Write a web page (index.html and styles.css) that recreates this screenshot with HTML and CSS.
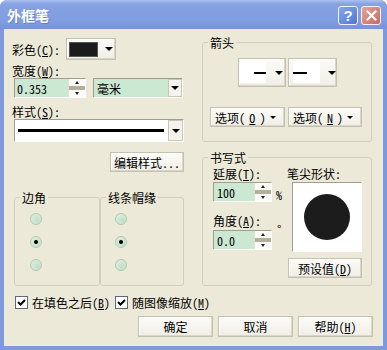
FILE: index.html
```
<!DOCTYPE html>
<html lang="zh-CN">
<head>
    <meta charset="UTF-8">
    <title>外框笔</title>
    <link rel="stylesheet" href="styles.css">
</head>
<body>

<div class="window">
    <div class="titlebar">
        <span class="title">外框笔</span>
        <div class="caption-btns">
            <span class="cap cap-help">?</span>
            <span class="cap cap-close">
                <svg width="11" height="11" viewBox="0 0 11 11"><path d="M1.5 1.5 L9.5 9.5 M9.5 1.5 L1.5 9.5" stroke="#fff" stroke-width="2.2" stroke-linecap="square"/></svg>
            </span>
        </div>
    </div>

    <div class="client">
        <div class="main">
            <!-- left column -->
            <div class="col-left">
                <div class="row color-row">
                    <span class="label">彩色(<u>C</u>):</span>
                    <span class="btn color-btn"><span class="swatch"></span><span class="tri"></span></span>
                </div>

                <div class="label label-width">宽度(<u>W</u>):</div>
                <div class="row width-row">
                    <div class="spin spin-width">
                        <span class="spin-field">0.353</span>
                        <span class="spin-btns"><i class="up"></i><i class="bar"></i><i class="down"></i></span>
                    </div>
                    <div class="combo combo-unit">
                        <span class="combo-field">毫米</span>
                        <span class="combo-btn"><span class="tri"></span></span>
                    </div>
                </div>

                <div class="label label-style">样式(<u>S</u>):</div>
                <div class="combo combo-style">
                    <span class="combo-field"><span class="line-sample"></span></span>
                    <span class="combo-btn"><span class="tri"></span></span>
                </div>

                <span class="btn edit-btn">编辑样式...</span>

                <div class="group-pair">
                    <fieldset class="group corner-group">
                        <legend>边角</legend>
                        <span class="radio"></span>
                        <span class="radio checked"></span>
                        <span class="radio"></span>
                    </fieldset>
                    <fieldset class="group cap-group">
                        <legend>线条帽缘</legend>
                        <span class="radio"></span>
                        <span class="radio checked"></span>
                        <span class="radio"></span>
                    </fieldset>
                </div>
            </div>

            <!-- right column -->
            <div class="col-right">
                <fieldset class="group arrows-group">
                    <legend>箭头</legend>
                    <div class="arrow-btns">
                        <span class="btn arrow-btn arrow-start"><span class="arrow-box"><span class="stub"></span></span><span class="tri"></span></span>
                        <span class="btn arrow-btn arrow-end"><span class="arrow-box"><span class="stub"></span></span><span class="tri"></span></span>
                    </div>
                    <div class="option-btns">
                        <span class="btn opt-btn">选项(<u>O</u>)<span class="tri small"></span></span>
                        <span class="btn opt-btn">选项(<u>N</u>)<span class="tri small"></span></span>
                    </div>
                </fieldset>

                <fieldset class="group calli-group">
                    <legend>书写式</legend>
                    <div class="calli-body">
                        <div class="calli-fields">
                            <div class="label">延展(<u>T</u>):</div>
                            <div class="row spin-row">
                                <div class="spin spin-small">
                                    <span class="spin-field">100</span>
                                    <span class="spin-btns"><i class="up"></i><i class="bar"></i><i class="down"></i></span>
                                </div>
                                <span class="unit">%</span>
                            </div>
                            <div class="label label-angle">角度(<u>A</u>):</div>
                            <div class="row spin-row angle-row">
                                <div class="spin spin-small">
                                    <span class="spin-field">0.0</span>
                                    <span class="spin-btns"><i class="up"></i><i class="bar"></i><i class="down"></i></span>
                                </div>
                                <span class="unit degree">°</span>
                            </div>
                        </div>
                        <div class="calli-preview">
                            <div class="label">笔尖形状:</div>
                            <div class="nib-box"><span class="nib"></span></div>
                            <span class="btn preset-btn">预设值(<u>D</u>)</span>
                        </div>
                    </div>
                </fieldset>
            </div>
        </div>

        <div class="checks">
            <span class="check"><svg width="11" height="11" viewBox="0 0 11 11"><path d="M2 5 L4.5 7.5 L9 3" fill="none" stroke="#000" stroke-width="2"/></svg></span>
            <span class="check-text">在填色之后(<u>B</u>)</span>
            <span class="check"><svg width="11" height="11" viewBox="0 0 11 11"><path d="M2 5 L4.5 7.5 L9 3" fill="none" stroke="#000" stroke-width="2"/></svg></span>
            <span class="check-text">随图像缩放(<u>M</u>)</span>
        </div>

        <div class="actions">
            <span class="btn action-btn">确定</span>
            <span class="btn action-btn">取消</span>
            <span class="btn action-btn">帮助(<u>H</u>)</span>
        </div>
    </div>
</div>

</body>
</html>
```

FILE: styles.css
```
* {
    box-sizing: border-box;
}
body {
    margin: 0;
    background: #fff;
    font: 12px/15px "Noto Sans Mono CJK SC", "Noto Sans CJK SC", sans-serif;
    color: #000;
}
u {
    text-decoration: underline;
    text-underline-offset: 1px;
}

/* window frame */
.window {
    width: 387px;
    height: 350px;
    background: #7e99dc;
    border-radius: 7px 7px 0 0;
    padding: 0 4px 4px;
    display: flex;
    flex-direction: column;
}
.titlebar {
    height: 29px;
    margin: 0 -4px;
    padding: 0 6px 0 7px;
    display: flex;
    align-items: center;
    justify-content: space-between;
    background: linear-gradient(#acc1ef, #86a2e3 4px, #7f9ce0 22px, #7793da);
    border-radius: 7px 7px 0 0;
}
.title {
    color: #fff;
    font: bold 14px/16px "Noto Sans CJK SC", sans-serif;
    text-shadow: 1px 1px 0 rgba(40, 60, 140, 0.3);
}
.caption-btns {
    display: flex;
    gap: 3px;
    margin-top: 1px;
}
.cap {
    width: 20px;
    height: 19px;
    border: 1px solid #f2f4fb;
    border-radius: 3px;
    display: flex;
    align-items: center;
    justify-content: center;
    color: #fff;
    font: bold 15px/1 "Liberation Sans", sans-serif;
}
.cap-help {
    background: linear-gradient(135deg, #86a5ec, #4f78d8);
}
.cap-close {
    background: linear-gradient(135deg, #e3a299, #c96a60);
}

.client {
    flex: 1;
    background: #ece9d8;
    padding: 6px 10px 0 8px;
}
.main {
    display: grid;
    grid-template-columns: 172px 170px;
    column-gap: 18px;
}
.row {
    display: flex;
    align-items: center;
}

/* generic controls */
.btn {
    display: flex;
    align-items: center;
    justify-content: center;
    background: linear-gradient(#fbfbf8, #f0eee5);
    border: 1px solid #c4c1b1;
    box-shadow: inset -1px -1px #d9d6c7, inset 1px 1px #fff;
}
.tri {
    width: 0;
    height: 0;
    border-left: 4px solid transparent;
    border-right: 4px solid transparent;
    border-top: 4px solid #000;
}
.tri.small {
    border-left-width: 3px;
    border-right-width: 3px;
    border-top-width: 3px;
}
.combo,
.spin {
    display: flex;
    border: 1px solid;
    border-color: #a19e8f #fdfdfb #fdfdfb #a19e8f;
}
.combo-field,
.spin-field {
    flex: 1;
    background: #cbe8d3;
    padding-left: 2px;
    display: flex;
    align-items: center;
}
.combo-btn {
    width: 14px;
    background: #f4f3ee;
    border: 1px solid #c9c6b6;
    display: flex;
    align-items: center;
    justify-content: center;
}
.spin-btns {
    width: 17px;
    display: flex;
    flex-direction: column;
    background: #fbfbf8;
    border-left: 1px solid #e2e0d4;
}
.spin-btns i {
    flex: 1;
    display: flex;
    align-items: center;
    justify-content: center;
}
.spin-btns .bar {
    flex: 0 0 4px;
    background: #b3af9f;
}
.spin-btns .up::after,
.spin-btns .down::after {
    content: "";
    border-left: 2px solid transparent;
    border-right: 2px solid transparent;
}
.spin-btns .up::after {
    border-bottom: 3px solid #222;
}
.spin-btns .down::after {
    border-top: 3px solid #222;
}

/* left column */
.col-left {
    padding-top: 3px;
    display: flex;
    flex-direction: column;
}
.color-row {
    height: 22px;
}
.color-row .label {
    width: 54px;
}
.color-btn {
    width: 50px;
    height: 22px;
    justify-content: flex-start;
    padding-left: 2px;
}
.swatch {
    width: 29px;
    height: 15px;
    background: #1b1b1b;
    border: 1px solid #555;
    margin-right: 7px;
}
.label-width {
    margin-top: 3px;
}
.width-row {
    height: 20px;
    margin-left: 2px;
}
.spin-width {
    width: 72px;
    height: 20px;
}
.combo-unit {
    width: 90px;
    height: 20px;
    margin-left: 7px;
}
.combo-unit .combo-field {
    padding-left: 3px;
}
.label-style {
    margin-top: 6px;
}
.combo-style {
    height: 23px;
    margin-left: 2px;
}
.combo-style .combo-field {
    background: #fff;
    padding: 0 4px 0 3px;
}
.combo-style .combo-btn {
    width: 15px;
}
.line-sample {
    flex: 1;
    height: 3px;
    background: #000;
}
.edit-btn {
    align-self: flex-end;
    width: 74px;
    height: 20px;
    margin-top: 10px;
}

/* group boxes */
.group {
    margin: 0;
    min-width: 0;
    border: 1px solid #d0cebf;
    border-radius: 3px;
}
legend {
    margin-left: 5px;
    padding: 0 2px;
    line-height: 15px;
}
.group-pair {
    margin-top: 18px;
    margin-left: 2px;
    display: grid;
    grid-template-columns: 86px 84px;
}
.corner-group,
.cap-group {
    height: 96px;
    display: flex;
    flex-direction: column;
    gap: 11px;
    padding: 8px 0 0 15px;
}
.corner-group legend {
    margin-left: -10px;
}
.cap-group {
    padding-left: 14px;
}
.cap-group legend {
    margin-left: -9px;
}
.radio {
    width: 12px;
    height: 12px;
    border-radius: 50%;
    border: 1px solid #b1c6b3;
    background: radial-gradient(circle at 65% 65%, #bfe0c6, #e4f1e6);
    display: flex;
    align-items: center;
    justify-content: center;
}
.radio.checked::after {
    content: "";
    width: 4px;
    height: 4px;
    border-radius: 50%;
    background: #000;
}

/* right column */
.col-right {
    display: flex;
    flex-direction: column;
}
.arrows-group {
    height: 107px;
    padding: 8px 0 0;
}
.arrow-btns {
    display: flex;
    justify-content: center;
    gap: 2px;
}
.arrow-btn {
    height: 29px;
    justify-content: flex-start;
    padding: 3px 0 3px 1px;
}
.arrow-start {
    width: 48px;
}
.arrow-end {
    width: 49px;
    padding-left: 4px;
}
.arrow-box {
    width: 26px;
    height: 21px;
    background: #fff;
    display: flex;
    align-items: center;
    justify-content: flex-end;
    margin-right: 9px;
}
.arrow-end .arrow-box {
    width: 29px;
    justify-content: flex-start;
    margin-right: 8px;
}
.stub {
    width: 12px;
    height: 2px;
    background: #000;
}
.arrow-end .stub {
    width: 14px;
}
.option-btns {
    display: flex;
    gap: 3px;
    margin-top: 20px;
    padding-left: 7px;
}
.opt-btn {
    width: 75px;
    height: 20px;
    justify-content: space-between;
    padding: 0 8px 0 4px;
}
.opt-btn + .opt-btn {
    width: 74px;
}

.calli-group {
    height: 136px;
    margin-top: 8px;
    padding: 1px 0 0 10px;
}
.calli-group legend {
    margin-left: -5px;
}
.calli-body {
    display: flex;
}
.calli-fields {
    width: 74px;
}
.spin-row {
    margin-top: 1px;
}
.spin-small {
    width: 59px;
    height: 20px;
}
.spin-small .spin-field {
    padding-left: 3px;
}
.unit {
    margin-left: 4px;
    margin-top: 4px;
}
.label-angle {
    margin-top: 11px;
}
.angle-row {
    margin-top: 2px;
    align-items: flex-start;
}
.degree {
    margin-left: 5px;
    margin-top: -9px;
}
.calli-preview {
    display: flex;
    flex-direction: column;
}
.nib-box {
    width: 70px;
    height: 70px;
    margin: 1px 0 0 5px;
    background: #fff;
    border: 1px solid;
    border-color: #a19e8f #fff #fff #a19e8f;
    display: flex;
    align-items: center;
    justify-content: center;
}
.nib {
    width: 46px;
    height: 46px;
    border-radius: 50%;
    background: #1c1c1c;
}
.preset-btn {
    width: 74px;
    height: 20px;
    margin: 6px 0 0 1px;
}

/* bottom rows */
.checks {
    display: flex;
    align-items: center;
    height: 15px;
    margin-top: 9px;
    padding-left: 3px;
}
.check {
    width: 13px;
    height: 13px;
    border: 1px solid #5d6a7a;
    background: #fff;
    display: flex;
    align-items: center;
    justify-content: center;
}
.check-text {
    margin: 0 5px 0 4px;
}
.actions {
    display: flex;
    justify-content: flex-end;
    gap: 5px;
    margin-top: 6px;
}
.action-btn {
    width: 75px;
    height: 21px;
}
```
